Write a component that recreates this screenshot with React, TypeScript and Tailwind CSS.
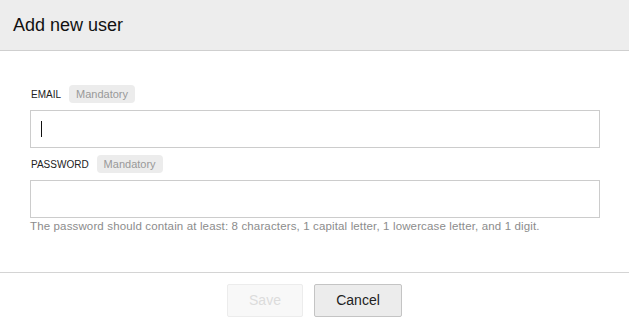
export default function App() {
  return (
    <div className="flex h-[334px] w-[629px] flex-col bg-white font-['Liberation_Sans',sans-serif]">
      {/* HEADER */}
      <div className="flex h-[51px] items-center border-b border-[#cfcfcf] bg-[#ededed] px-[13px]">
        <h1 className="text-[18px] text-[#111]">Add new user</h1>
      </div>

      {/* BODY */}
      <div className="flex h-[222px] flex-col border-b border-[#d4d4d4] px-[30px] pt-[34px]">
        <div className="flex items-center gap-[8px] pl-px">
          <span className="text-[10px] text-[#222]">EMAIL</span>
          <span className="flex h-[18px] items-center rounded-[4px] bg-[#ececec] px-[7px] text-[11px] text-[#999]">
            Mandatory
          </span>
        </div>
        <div className="mt-[7px] flex h-[38px] w-[570px] items-center border border-[#cccccc] px-[10px]">
          <span className="h-[16px] w-px bg-[#111]" />
        </div>

        <div className="mt-[7px] flex items-center gap-[8px] pl-px">
          <span className="text-[10px] text-[#222]">PASSWORD</span>
          <span className="flex h-[18px] items-center rounded-[4px] bg-[#ececec] px-[7px] text-[11px] text-[#999]">
            Mandatory
          </span>
        </div>
        <div className="mt-[7px] h-[38px] w-[570px] border border-[#cccccc]" />
        <p className="text-[11.5px] tracking-[0.14px] text-[#8c8c8c]">
          The password should contain at least: 8 characters, 1 capital letter, 1 lowercase letter, and 1 digit.
        </p>
      </div>

      {/* FOOTER */}
      <div className="flex justify-center gap-[11px] pt-[11px]">
        <button className="h-[33px] w-[76px] rounded-[2px] border border-[#ececec] bg-[#f8f8f8] text-[14px] text-[#dcdcdc]">
          Save
        </button>
        <button className="h-[33px] w-[88px] rounded-[2px] border border-[#c4c4c4] bg-[#ececec] text-[14px] text-[#222]">
          Cancel
        </button>
      </div>
    </div>
  );
}
